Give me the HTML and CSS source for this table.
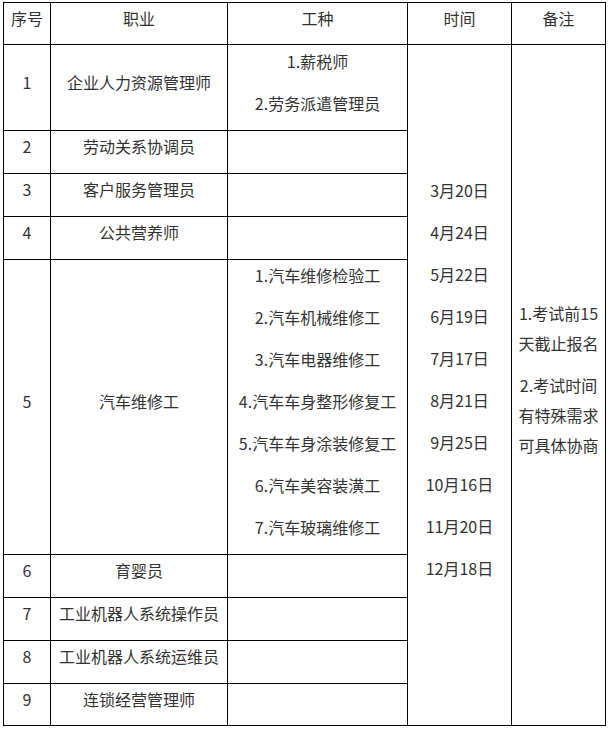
FILE: index.html
```html
<!DOCTYPE html>
<html lang="zh-CN">
<head>
<meta charset="utf-8">
<link rel="stylesheet" href="styles.css">
</head>
<body>
<div class="sheet">
  <div class="cell head"><p>序号</p></div>
  <div class="cell head"><p>职业</p></div>
  <div class="cell head"><p>工种</p></div>
  <div class="cell head"><p>时间</p></div>
  <div class="cell head"><p>备注</p></div>

  <div class="cell"><p>1</p></div>
  <div class="cell"><p>企业人力资源管理师</p></div>
  <div class="cell"><p>1.薪税师</p><p>2.劳务派遣管理员</p></div>
  <div class="cell span9">
    <p>3月20日</p><p>4月24日</p><p>5月22日</p><p>6月19日</p><p>7月17日</p>
    <p>8月21日</p><p>9月25日</p><p>10月16日</p><p>11月20日</p><p>12月18日</p>
  </div>
  <div class="cell span9 note">
    <p>1.考试前15天截止报名</p>
    <p>2.考试时间有特殊需求可具体协商</p>
  </div>

  <div class="cell"><p>2</p></div>
  <div class="cell"><p>劳动关系协调员</p></div>
  <div class="cell"></div>

  <div class="cell"><p>3</p></div>
  <div class="cell"><p>客户服务管理员</p></div>
  <div class="cell"></div>

  <div class="cell"><p>4</p></div>
  <div class="cell"><p>公共营养师</p></div>
  <div class="cell"></div>

  <div class="cell"><p>5</p></div>
  <div class="cell"><p>汽车维修工</p></div>
  <div class="cell">
    <p>1.汽车维修检验工</p><p>2.汽车机械维修工</p><p>3.汽车电器维修工</p>
    <p>4.汽车车身整形修复工</p><p>5.汽车车身涂装修复工</p><p>6.汽车美容装潢工</p>
    <p>7.汽车玻璃维修工</p>
  </div>

  <div class="cell"><p>6</p></div>
  <div class="cell"><p>育婴员</p></div>
  <div class="cell"></div>

  <div class="cell"><p>7</p></div>
  <div class="cell"><p>工业机器人系统操作员</p></div>
  <div class="cell"></div>

  <div class="cell"><p>8</p></div>
  <div class="cell"><p>工业机器人系统运维员</p></div>
  <div class="cell"></div>

  <div class="cell"><p>9</p></div>
  <div class="cell"><p>连锁经营管理师</p></div>
  <div class="cell"></div>
</div>
</body>
</html>
```
FILE: styles.css
```css
html, body {
  margin: 0;
  padding: 0;
  background: #fff;
}
body {
  padding: 2px 0 0 3px;
  font-family: "Noto Sans CJK SC", "Microsoft YaHei", sans-serif;
  font-size: 16px;
  color: #333;
}
.sheet {
  display: grid;
  grid-template-columns: 46px 176px 179px 103px 93px;
  grid-template-rows: 41px 85px 42px 42px 42px 294px 42px 42px 42px 41px;
  gap: 1px;
  padding: 1px;
  background: #000;
  width: max-content;
}
.cell {
  background: #fff;
  display: flex;
  flex-direction: column;
  justify-content: center;
  align-items: center;
  text-align: center;
  overflow: hidden;
}
.cell p {
  margin: 0 0 12px;
  line-height: 30px;
  white-space: nowrap;
}
.cell.head p {
  margin-bottom: 11px;
}
.span9 {
  grid-row: span 9;
}
.note {
  padding-left: 6px;
  padding-right: 6px;
}
.note p {
  white-space: normal;
  width: 80px;
}
```
